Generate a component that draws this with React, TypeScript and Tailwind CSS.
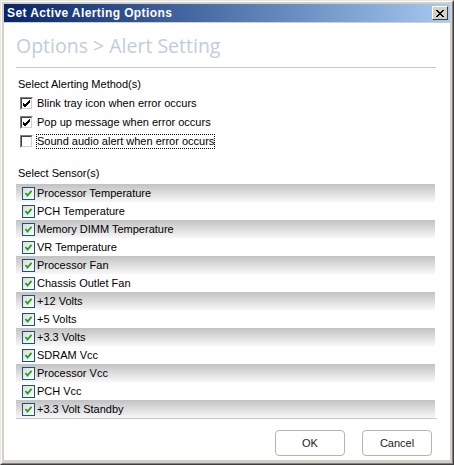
import React from 'react';

const methods = [
  { label: 'Blink tray icon when error occurs', checked: true },
  { label: 'Pop up message when error occurs', checked: true },
  { label: 'Sound audio alert when error occurs', checked: false, focused: true },
];

const sensors = [
  'Processor Temperature',
  'PCH Temperature',
  'Memory DIMM Temperature',
  'VR Temperature',
  'Processor Fan',
  'Chassis Outlet Fan',
  '+12 Volts',
  '+5 Volts',
  '+3.3 Volts',
  'SDRAM Vcc',
  'Processor Vcc',
  'PCH Vcc',
  '+3.3 Volt Standby',
];

const ui = { fontFamily: '"Liberation Sans", Arial, sans-serif' };

// classic sunken 3D checkbox
const ClassicCheck: React.FC<{ checked: boolean }> = ({ checked }) => (
  <div className="w-[13px] h-[13px] shrink-0 border-t border-l border-t-[#808080] border-l-[#808080] border-b border-r border-b-white border-r-white">
    <div className="w-full h-full border-t border-l border-t-[#404040] border-l-[#404040] border-b border-r border-b-[#d4d0c8] border-r-[#d4d0c8] bg-white flex items-center justify-center">
      {checked && (
        <svg width="9" height="9" viewBox="0 0 9 9">
          <path d="M1 4 L3 6 L8 1 M1 5 L3 7 L8 2 M1 6 L3 8 L8 3" stroke="#000" strokeWidth="1" fill="none" />
        </svg>
      )}
    </div>
  </div>
);

// themed checkbox with the green tick
const ListCheck: React.FC = () => (
  <div className="w-[13px] h-[13px] shrink-0 border border-[#1c5180] bg-gradient-to-br from-[#dcdcd7] to-[#ffffff] flex items-center justify-center">
    <svg width="9" height="9" viewBox="0 0 9 9">
      <path d="M1.5 4 L3.5 6.5 L7.5 1.8" stroke="#21a121" strokeWidth="1.8" fill="none" />
    </svg>
  </div>
);

export default function App() {
  return (
    <div className="w-[454px] h-[465px] bg-[#d4d0c8] border-t border-l border-t-[#e8e6e0] border-l-[#e8e6e0] border-b border-r border-b-[#404040] border-r-[#404040] flex flex-col" style={ui}>
      <div className="flex flex-col flex-1 border-t border-l border-t-white border-l-white border-b border-r border-b-[#808080] border-r-[#808080] p-[1px]">
        {/* title bar */}
        <div className="h-[18px] mx-[1px] mt-[1px] flex items-center justify-between bg-gradient-to-r from-[#0a246a] to-[#a6caf0] pl-[3px] pr-[2px]">
          <span className="text-white font-bold text-[12px] tracking-[0.4px]">Set Active Alerting Options</span>
          <div className="w-[16px] h-[14px] bg-[#d4d0c8] border-t border-l border-t-white border-l-white border-b border-r border-b-[#404040] border-r-[#404040] flex items-center justify-center">
            <svg width="8" height="7" viewBox="0 0 8 7">
              <path d="M0 0 L7 7 M1 0 L8 7 M7 0 L0 7 M8 0 L1 7" stroke="#000" strokeWidth="1" fill="none" />
            </svg>
          </div>
        </div>

        {/* body */}
        <div className="flex-1 bg-white mt-[1px] mb-[2px] mx-[1px] flex flex-col px-[12px]">
          <div className="pt-[10px] pb-[8px] text-[19.5px] leading-[26px] text-[#bfcddb]" style={{ fontFamily: '"Open Sans", sans-serif' }}>
            Options &gt; Alert Setting
          </div>
          <div className="h-px bg-[#c8c8c8] mr-[2px]" />

          <div className="mt-[9px] text-[11px] leading-[14px] text-black pl-[2px]">Select Alerting Method(s)</div>
          <div className="flex flex-col gap-[5px] mt-[5px] pl-[4px]">
            {methods.map((m) => (
              <div key={m.label} className="flex items-center gap-[4px] h-[14px]">
                <ClassicCheck checked={m.checked} />
                <span className={`text-[11px] leading-[13px] text-black ${m.focused ? 'outline outline-1 outline-dotted outline-black' : ''}`}>
                  {m.label}
                </span>
              </div>
            ))}
          </div>

          <div className="mt-[18px] text-[11px] leading-[14px] text-black pl-[2px]">Select Sensor(s)</div>
          <div className="mt-[4px] mr-[1px] flex flex-col border-b border-[#c8c8c8]">
            {sensors.map((s, i) => (
              <div
                key={s}
                className={`h-[18px] flex items-center gap-[2px] pl-[6px] ${i % 2 === 0 ? 'bg-gradient-to-b from-[#c2c2c2] to-[#f8f8f8] border-r-2 border-white' : 'bg-white'}`}
              >
                <ListCheck />
                <span className="text-[11px] leading-[14px] text-black">{s}</span>
              </div>
            ))}
          </div>

          <div className="flex justify-end gap-[17px] mt-[11px] pr-[6px]">
            <button className="w-[70px] h-[26px] rounded-[4px] border border-[#b4b4b4] bg-white text-[11px] text-[#222]">OK</button>
            <button className="w-[70px] h-[26px] rounded-[4px] border border-[#b4b4b4] bg-white text-[11px] text-[#222]">Cancel</button>
          </div>
        </div>
      </div>
    </div>
  );
}
